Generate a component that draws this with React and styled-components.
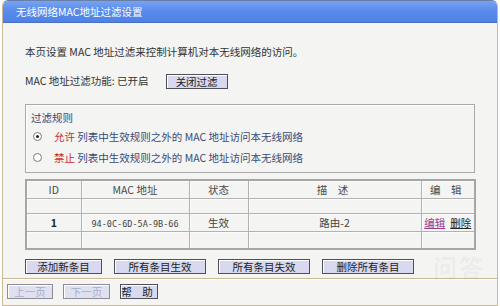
import React from "react";
import styled, { createGlobalStyle } from "styled-components";

const Global = createGlobalStyle`
  html, body { margin: 0; padding: 0; background: #ffffff; }
  body { font-family: "Noto Sans CJK SC", "Liberation Sans", sans-serif; font-size: 10.5px; color: #333; }
  #root { width: 500px; height: 306px; overflow: hidden; }
`;

const Frame = styled.div`
  position: relative;
  box-sizing: border-box;
  width: 496px;
  height: 306px;
  margin-left: 2px;
  border: 1px solid #c9b995;
  border-top-color: #6a7fa8;
  border-radius: 6px 6px 0 0;
  background: #f4f4f2;
  overflow: hidden;
  display: flex;
  flex-direction: column;
`;

const TitleBar = styled.div`
  height: 21px;
  flex: none;
  display: flex;
  align-items: center;
  padding-left: 13px;
  color: #ffffff;
  font-size: 10.5px;
  background: linear-gradient(to bottom, #76a3f2 0%, #5a8cec 45%, #4d81e6 100%);
  border-bottom: 1px solid #4a70c0;
`;

const Content = styled.div`
  padding: 0 22px;
  display: flex;
  flex-direction: column;
`;

const Line = styled.div`
  height: 16px;
  line-height: 16px;
  margin-top: ${(p) => p.$mt || 0}px;
  display: flex;
  align-items: center;
  white-space: pre;
`;

const Btn = styled.button`
  box-sizing: border-box;
  height: 15px;
  width: ${(p) => p.$w}px;
  margin-left: ${(p) => p.$ml || 0}px;
  padding: 0;
  font-family: inherit;
  font-size: 10.5px;
  line-height: 13px;
  color: ${(p) => (p.$disabled ? "#a8aec8" : "#222")};
  background: ${(p) => (p.$disabled ? "#dfe1f0" : "#d8d8ee")};
  border: 1px solid ${(p) => (p.$disabled ? "#8d8d9a" : "#4f4f58")};
  box-shadow: inset 1px 1px 0 #ffffff;
  letter-spacing: ${(p) => p.$ls || 0}px;
  cursor: default;
`;

const RulesBox = styled.div`
  box-sizing: border-box;
  margin-top: 15px;
  height: 69px;
  border: 1px solid #a9a9a9;
  box-shadow: inset 1px 1px 0 #ffffff;
  padding: 5px 0 0 5px;
  display: flex;
  flex-direction: column;
`;

const RuleTitle = styled.div`
  height: 16px;
  line-height: 16px;
  color: #3a4670;
`;

const RuleRow = styled.div`
  height: 21px;
  display: flex;
  align-items: center;
  padding-left: 2px;
  white-space: pre;
  color: #3b4a78;
`;

const Radio = styled.span`
  box-sizing: border-box;
  width: 9px;
  height: 9px;
  border-radius: 50%;
  border: 1px solid #7a7a7a;
  background: #fff;
  margin-right: 12px;
  display: inline-flex;
  align-items: center;
  justify-content: center;
  &::after {
    content: "";
    width: 3px;
    height: 3px;
    border-radius: 50%;
    background: ${(p) => (p.$checked ? "#222" : "transparent")};
  }
`;

const Red = styled.span`
  color: #c8282c;
`;

const Table = styled.table`
  margin-top: 6px;
  border-collapse: collapse;
  width: 449px;
  border: 2px solid #a6a6a6;
  table-layout: fixed;
`;

const Cell = styled.td`
  border: 1px solid #b2b2b2;
  padding: 0;
  text-align: center;
  height: ${(p) => p.$h}px;
  color: #444;
  font-size: 10.5px;
  white-space: pre;
  box-shadow: inset 1px 1px 0 #fbfbfb;
`;

const HeadCell = styled(Cell).attrs({ as: "th" })`
  font-weight: normal;
  color: #4a4a4a;
  letter-spacing: ${(p) => p.$ls || 0}px;
`;

const Mono = styled.span`
  font-family: "DejaVu Sans Mono", "Liberation Mono", monospace;
  font-size: 8.5px;
  color: #444;
`;

const Bold = styled.span`
  font-weight: bold;
  color: #222;
`;

const Link = styled.a`
  color: ${(p) => p.$color};
  text-decoration: underline;
  margin-left: ${(p) => p.$ml || 0}px;
`;

const BtnRow = styled.div`
  margin-top: 9px;
  display: flex;
  align-items: center;
`;

const Separator = styled.div`
  margin-top: 4px;
  height: 1px;
  background: #c9b995;
  box-shadow: 0 1px 0 #ffffff;
`;

const Footer = styled.div`
  margin-top: 5px;
  padding-left: 4px;
  display: flex;
  align-items: center;
`;

const Watermark = styled.div`
  position: absolute;
  right: 12px;
  bottom: 26px;
  font-family: "Noto Sans CJK SC", sans-serif;
  font-weight: bold;
  font-size: 24px;
  line-height: 24px;
  letter-spacing: 2px;
  color: rgba(120, 120, 120, 0.08);
  pointer-events: none;
`;

export default function App() {
  return (
    <>
      <Global />
      <Frame>
        <TitleBar>无线网络MAC地址过滤设置</TitleBar>
        <Content>
          <Line $mt={21}>本页设置 MAC 地址过滤来控制计算机对本无线网络的访问。</Line>
          <Line $mt={13}>
            MAC 地址过滤功能: 已开启
            <Btn $w={62} $ml={17}>关闭过滤</Btn>
          </Line>
          <RulesBox>
            <RuleTitle>过滤规则</RuleTitle>
            <RuleRow>
              <Radio $checked />
              <Red>允许</Red> 列表中生效规则之外的 MAC 地址访问本无线网络
            </RuleRow>
            <RuleRow>
              <Radio />
              <Red>禁止</Red> 列表中生效规则之外的 MAC 地址访问本无线网络
            </RuleRow>
          </RulesBox>
          <Table>
            <colgroup>
              <col style={{ width: 55 }} />
              <col style={{ width: 108 }} />
              <col style={{ width: 59 }} />
              <col style={{ width: 173 }} />
              <col style={{ width: 54 }} />
            </colgroup>
            <thead>
              <tr>
                <HeadCell $h={17}>ID</HeadCell>
                <HeadCell $h={17}>MAC 地址</HeadCell>
                <HeadCell $h={17}>状态</HeadCell>
                <HeadCell $h={17} $ls={4}>描 述</HeadCell>
                <HeadCell $h={17} $ls={4}>编 辑</HeadCell>
              </tr>
            </thead>
            <tbody>
              <tr>
                <Cell $h={14} />
                <Cell $h={14} />
                <Cell $h={14} />
                <Cell $h={14} />
                <Cell $h={14} />
              </tr>
              <tr>
                <Cell $h={17}><Bold>1</Bold></Cell>
                <Cell $h={17}><Mono>94-0C-6D-5A-9B-66</Mono></Cell>
                <Cell $h={17}>生效</Cell>
                <Cell $h={17}>路由-2</Cell>
                <Cell $h={17}>
                  <Link $color="#9a3d8e">编辑</Link>
                  <Link $color="#222" $ml={5}>删除</Link>
                </Cell>
              </tr>
              <tr>
                <Cell $h={16} />
                <Cell $h={16} />
                <Cell $h={16} />
                <Cell $h={16} />
                <Cell $h={16} />
              </tr>
            </tbody>
          </Table>
          <BtnRow>
            <Btn $w={77}>添加新条目</Btn>
            <Btn $w={92} $ml={12}>所有条目生效</Btn>
            <Btn $w={92} $ml={12}>所有条目失效</Btn>
            <Btn $w={92} $ml={12}>删除所有条目</Btn>
          </BtnRow>
        </Content>
        <Separator />
        <Footer>
          <Btn $w={46} $disabled>上一页</Btn>
          <Btn $w={47} $ml={10} $disabled>下一页</Btn>
          <Btn $w={38} $ml={10} $ls={4}>帮 助</Btn>
        </Footer>
        <Watermark>问答</Watermark>
      </Frame>
    </>
  );
}
